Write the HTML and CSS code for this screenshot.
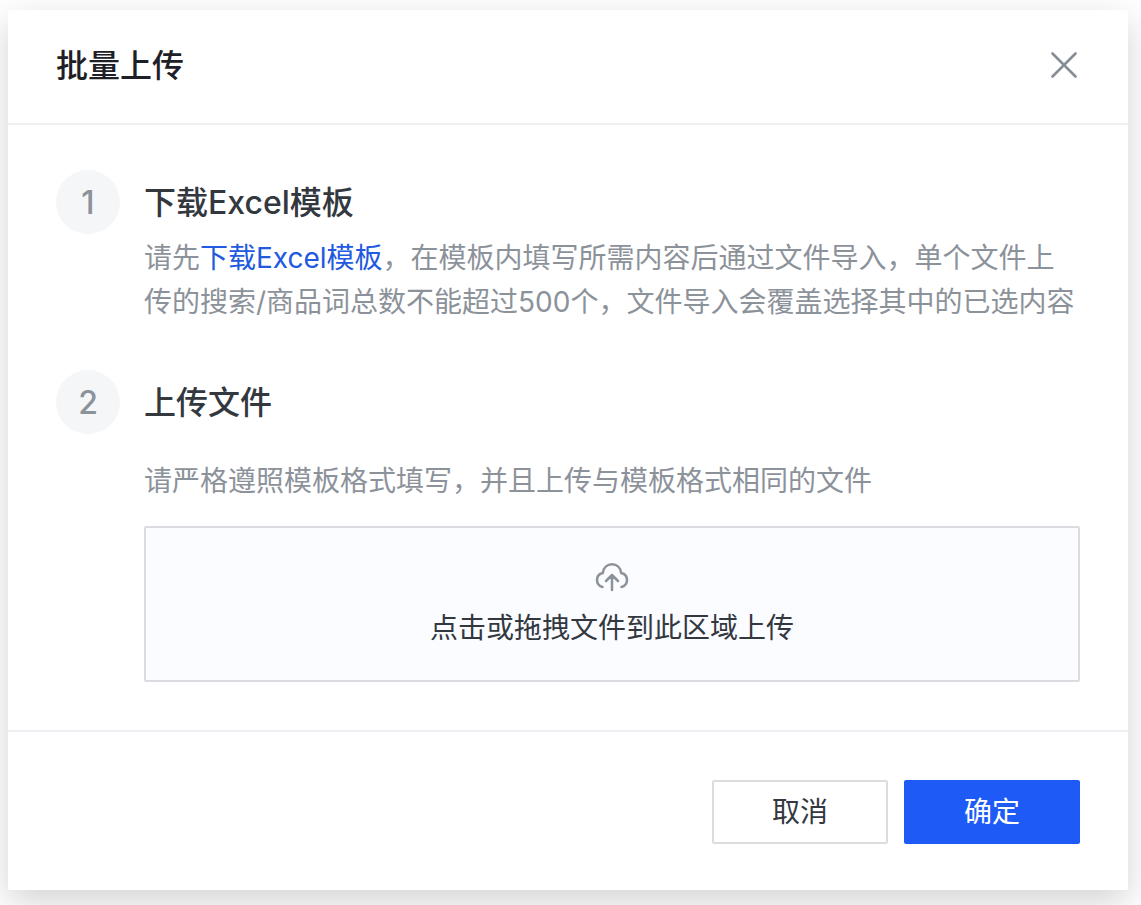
FILE: index.html
```html
<!DOCTYPE html>
<html lang="zh-CN">
<head>
<meta charset="utf-8">
<meta name="viewport" content="width=device-width, initial-scale=1">
<title>批量上传</title>
<link rel="stylesheet" href="styles.css">
</head>
<body class="page">
<section class="dialog" role="dialog" aria-labelledby="dialog-title">
  <header class="dialog-header">
    <h1 class="dialog-title" id="dialog-title">批量上传</h1>
    <button class="close-button" type="button" aria-label="关闭">
      <svg class="close-icon" viewBox="0 0 28 28" fill="none" stroke="currentColor" stroke-width="2.6" stroke-linecap="round" aria-hidden="true"><path d="M2.500 1.500 25.500 24.500M25.500 1.500 2.500 24.500"/></svg>
    </button>
  </header>
  <div class="dialog-body">
    <section class="step">
      <span class="step-number">1</span>
      <div class="step-content">
        <h2 class="step-title">下载Excel模板</h2>
        <p class="step-text">请先<a class="link" href="#template">下载Excel模板</a>，在模板内填写所需内容后通过文件导入，单个文件上传的搜索/商品词总数不能超过500个，文件导入会覆盖选择其中的已选内容</p>
      </div>
    </section>
    <section class="step">
      <span class="step-number">2</span>
      <div class="step-content">
        <h2 class="step-title">上传文件</h2>
        <p class="step-text step-text-spaced">请严格遵照模板格式填写，并且上传与模板格式相同的文件</p>
        <button class="dropzone" type="button">
          <svg class="upload-icon" viewBox="0 0 34 30" fill="none" stroke="currentColor" stroke-width="2.500" stroke-linecap="round" stroke-linejoin="round" aria-hidden="true"><path d="M7.500 25C4 24 2 21.500 2 18c0-3.500 2.300-6.200 5.800-7C8.400 5.600 12.200 2.200 17 2.200s8.600 3.400 9.200 8.800c3.500.8 5.800 3.500 5.800 7s-2 6-5.500 7M17 28V13.500M11 19l6-6 6 6"/></svg>
          <span>点击或拖拽文件到此区域上传</span>
        </button>
      </div>
    </section>
  </div>
  <footer class="dialog-footer">
    <button class="button" type="button">取消</button>
    <button class="button button-primary" type="button">确定</button>
  </footer>
</section>
</body>
</html>
```

FILE: styles.css
```css
* {
  box-sizing: border-box;
}

.page {
  margin: 0;
  padding: 10px 13px 15px 8px;
  background: #fff;
  color: #33383f;
  font-family: Inter, "Noto Sans CJK SC", sans-serif;
  font-size: 28px;
  line-height: 44px;
}

.dialog {
  background: #fff;
  border-radius: 2px;
  box-shadow: 0 12px 36px rgba(0, 0, 0, 0.18);
}

.dialog-header {
  display: flex;
  align-items: center;
  justify-content: space-between;
  padding: 24px 48px 25px;
  border-bottom: 2px solid #eef1f2;
}

.dialog-title,
.step-title {
  margin: 0;
  font-size: 32px;
  font-weight: 500;
  line-height: 64px;
}

.dialog-title {
  color: #1d2026;
}

.close-button {
  display: flex;
  padding: 2px;
  border: 0;
  background: none;
  color: #878d95;
  cursor: pointer;
}

.close-icon {
  width: 28px;
  height: 28px;
}

.dialog-body {
  display: flex;
  flex-direction: column;
  gap: 46px;
  padding: 45px 48px 48px;
}

.step {
  display: flex;
  gap: 24px;
}

.step-number {
  flex: none;
  width: 64px;
  height: 64px;
  border-radius: 50%;
  background: #f4f6f8;
  color: #8c929a;
  font-size: 32px;
  font-weight: 500;
  line-height: 66px;
  text-align: center;
}

.step-content {
  flex: 1;
  min-width: 0;
}

.step-title {
  line-height: 66px;
}

.step-text {
  margin: 0;
  color: #8c929a;
}

.step-text-spaced {
  margin: 23px 0;
}

.link {
  color: #2159e0;
  text-decoration: none;
}

.dropzone {
  display: flex;
  flex-direction: column;
  align-items: center;
  gap: 14px;
  width: 100%;
  padding: 34px 24px 30px;
  border: 2px solid #dadce2;
  border-radius: 2px;
  background: #fafcff;
  color: #33383f;
  font: inherit;
  cursor: pointer;
}

.upload-icon {
  width: 34px;
  height: 30px;
  color: #8c929a;
}

.dialog-footer {
  display: flex;
  justify-content: flex-end;
  gap: 16px;
  padding: 48px 48px 46px;
  border-top: 2px solid #eff0f6;
}

.button {
  width: 176px;
  height: 64px;
  padding: 0;
  border: 2px solid #dadce0;
  border-radius: 2px;
  background: #fff;
  color: #33383f;
  font: inherit;
  cursor: pointer;
}

.button-primary {
  border-color: #1e5af5;
  background: #1e5af5;
  color: #fff;
}
```
